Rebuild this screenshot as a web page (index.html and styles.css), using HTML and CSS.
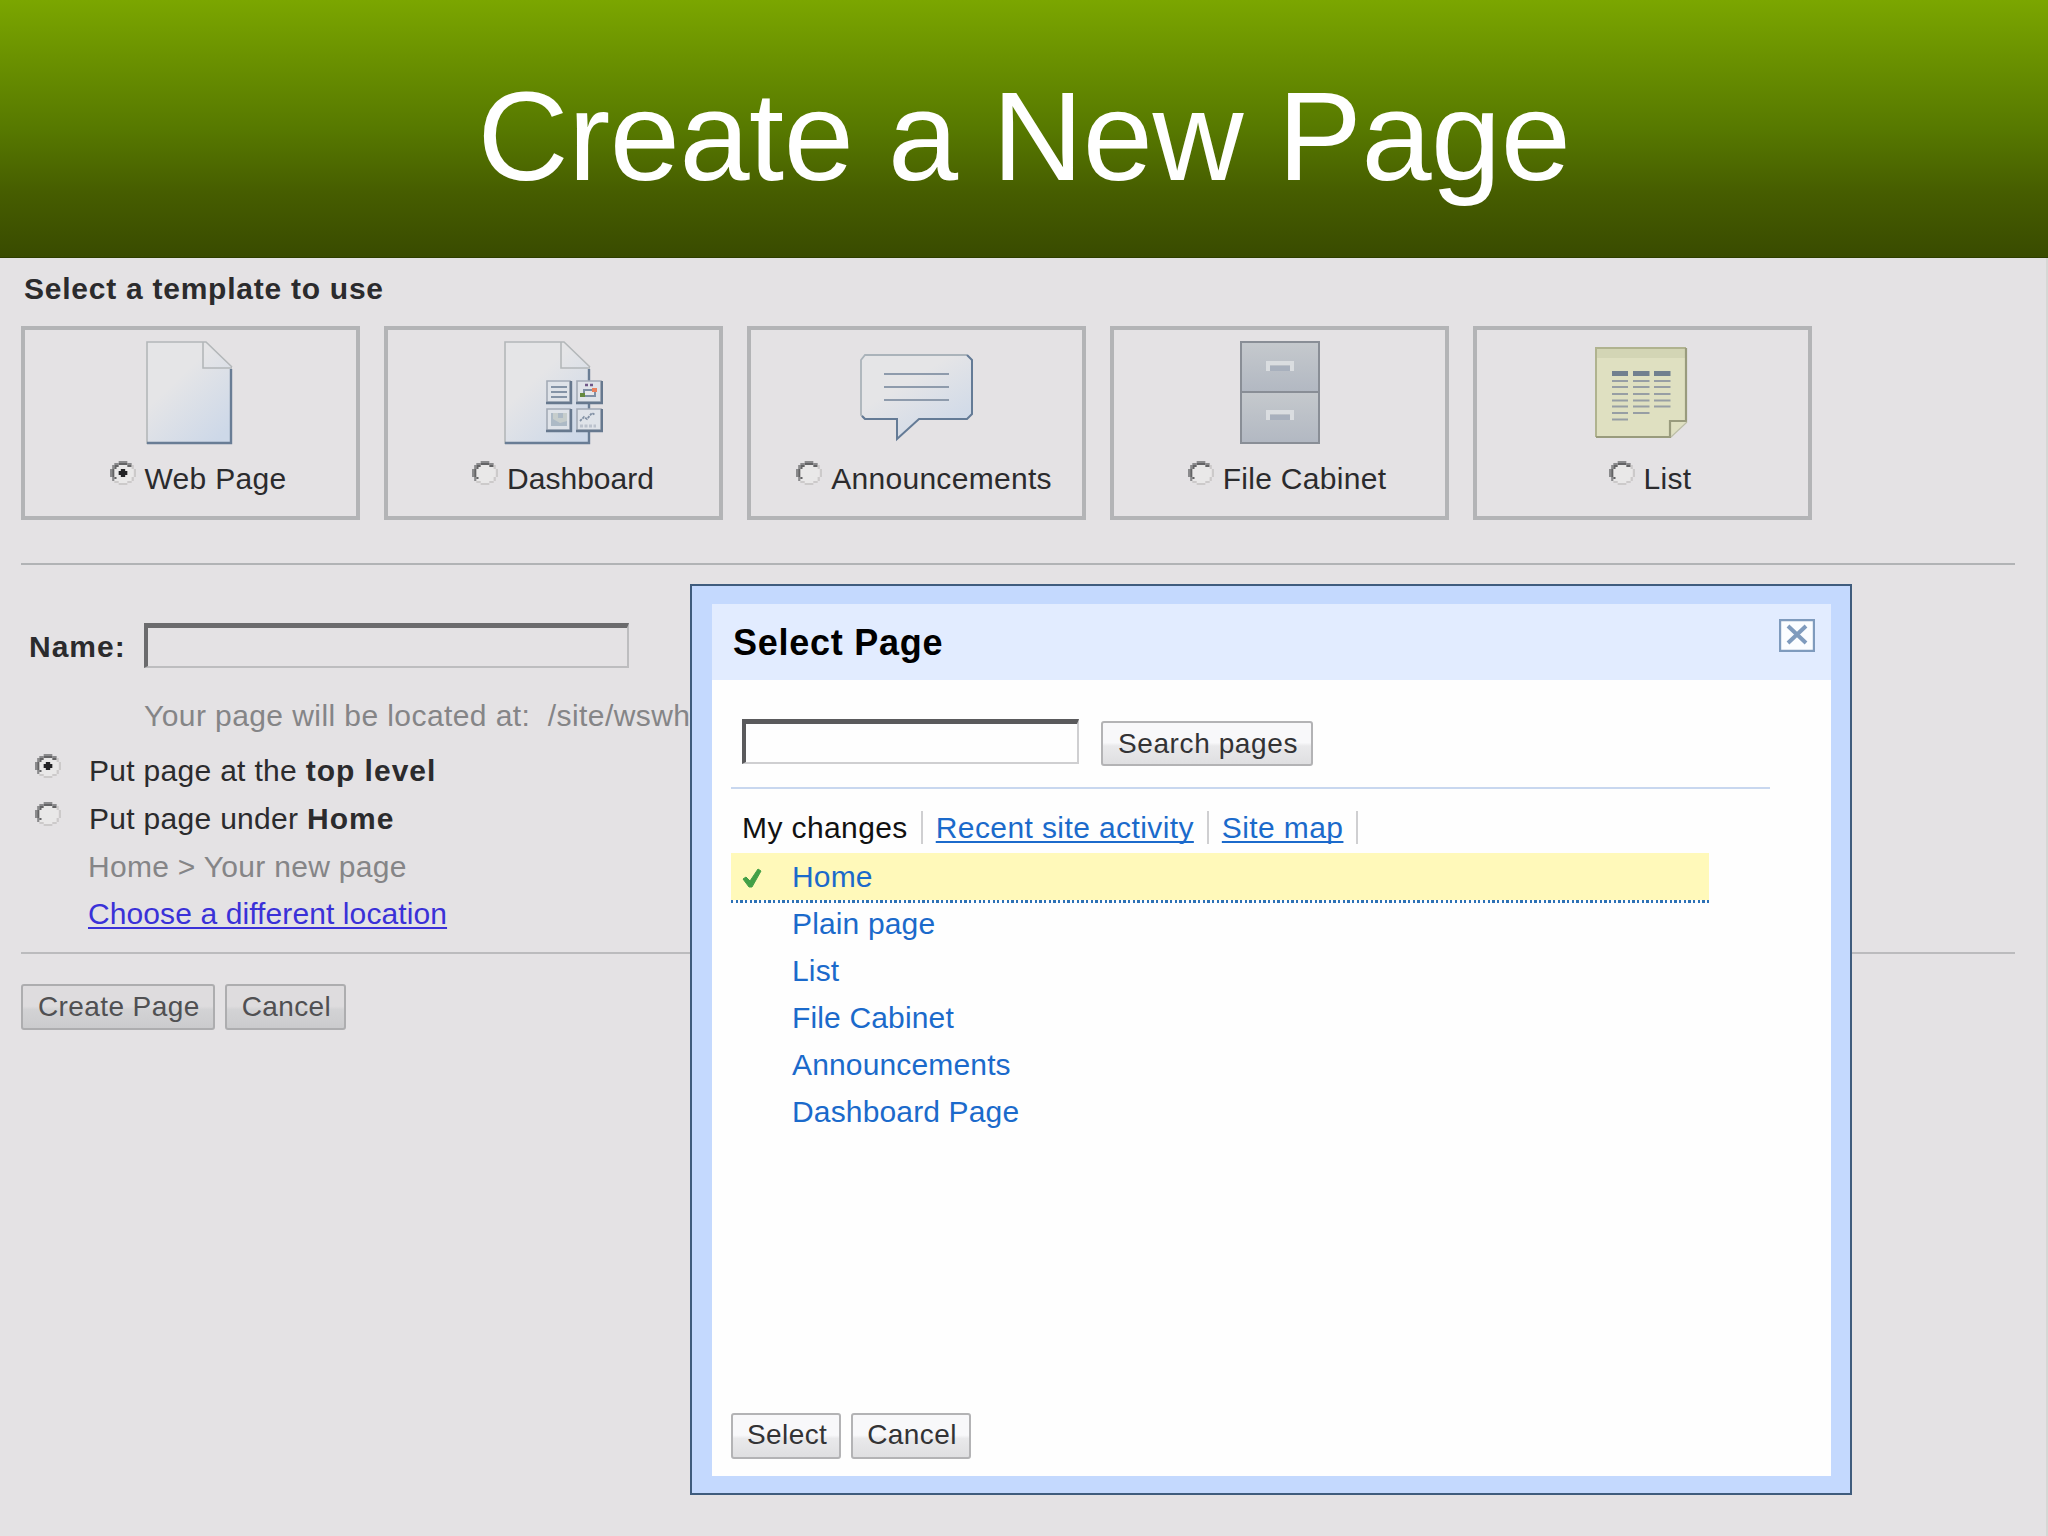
FILE: index.html
```
<!DOCTYPE html>
<html lang="en">

<head>
    <meta charset="UTF-8">
    <title>Create a New Page</title>
    <link rel="stylesheet" href="styles.css">
</head>

<body>
    <svg class="defs" width="0" height="0">
        <defs>
            <linearGradient id="paper" x1="0.2" y1="0" x2="1" y2="1">
                <stop offset="0.3" stop-color="#e5e5e7" />
                <stop offset="0.9" stop-color="#cdd8e8" />
            </linearGradient>
            <linearGradient id="drawer" x1="0" y1="0" x2="0" y2="1">
                <stop offset="0" stop-color="#c5c9cd" />
                <stop offset="1" stop-color="#b2b8c2" />
            </linearGradient>
        </defs>
        <symbol id="radio" viewBox="0 0 12 12" preserveAspectRatio="none">
            <path d="M4 1H8V2H10V4H11V8H10V10H8V11H4V10H2V8H1V4H2V2H4Z" fill="#e9e8e8" />
            <path d="M4 0h4v1h-4zM2 1h2v1h-2zM8 1h2v1h-2zM1 2h1v2h-1zM0 4h1v4h-1zM1 8h1v2h-1z" fill="#8a8a8c" />
            <path d="M4 1h4v1h-4zM2 2h2v1h-2zM8 2h2v1h-2zM2 3h1v1h-1zM1 4h1v4h-1zM2 8h1v1h-1z" fill="#636365" />
            <path d="M10 2h1v2h-1zM11 4h1v4h-1zM10 8h1v2h-1zM8 10h2v1h-2zM4 11h4v1h-4zM2 10h2v1h-2z" fill="#cccaca" />
        </symbol>
        <symbol id="radio-on" viewBox="0 0 12 12" preserveAspectRatio="none">
            <use href="#radio" width="12" height="12" />
            <path d="M5 4h2v1h1v2h-1v1h-2v-1h-1v-2h1z" fill="#232325" />
        </symbol>
    </svg>
    <header>
        <h1>Create a New Page</h1>
    </header>
    <main>
        <h2>Select a template to use</h2>
        <section class="templates">
            <article>
                <svg class="picture picture-page" width="87" height="104" viewBox="0 0 87 104">
                    <path d="M1 1H60L86 27V102H1Z" fill="url(#paper)" />
                    <path d="M1 103V1H60L86 26M57 1V27H86" fill="none" stroke="#b3b7b9" stroke-width="1.6" />
                    <path d="M1 102H85V28" fill="none" stroke="#697d95" stroke-width="2.4" />
                </svg>
                <label><svg class="radio"><use href="#radio-on" /></svg>Web Page</label>
            </article>
            <article>
                <svg class="picture" width="99" height="104" viewBox="0 0 99 104">
                    <path d="M1 1H60L86 27V102H1Z" fill="url(#paper)" />
                    <path d="M1 103V1H60L86 26M57 1V27H86" fill="none" stroke="#b3b7b9" stroke-width="1.6" />
                    <path d="M1 102H85V28" fill="none" stroke="#697d95" stroke-width="2.4" />
                    <g fill="#dfe3e9" stroke="#a3abb6" stroke-width="1.6">
                        <path d="M43 40H66V61H43ZM73 40H97V61H73ZM43 68H66V89H43ZM73 68H97V89H73Z" />
                    </g>
                    <path d="M42 62H67V40M72 62H98V40M42 90H67V68M72 90H98V68" fill="none" stroke="#66788e" stroke-width="2.4" />
                    <path d="M47 46H63M47 51H63M47 56H63" stroke="#8493a6" stroke-width="2" />
                    <path d="M81 44H84M86 44H89" stroke="#6f5888" stroke-width="2.5" />
                    <path d="M80 49H91V55H80Z" fill="#e6e8ec" stroke="#7f90a6" stroke-width="2" />
                    <path d="M88 47H93V51H88Z" fill="#ea815e" />
                    <path d="M76 52H81V56H76Z" fill="#64893f" />
                    <path d="M47 72H63V85H47Z" fill="#adbac6" />
                    <path d="M49 72H54V77H59V72H63V80L56 82L49 78Z" fill="#c6cdcc" />
                    <path d="M76 80L80 76L83 78L88 72L91 74" fill="none" stroke="#8190a4" stroke-width="1.8" stroke-dasharray="2.5 1" />
                    <path d="M76 85H92" stroke="#bbc2cd" stroke-width="3" stroke-dasharray="3 1.5" />
                </svg>
                <label class="shift"><svg class="radio"><use href="#radio" /></svg>Dashboard</label>
            </article>
            <article>
                <svg class="picture" width="113" height="104" viewBox="0 0 113 104">
                    <path d="M5 14H107L112 19V73L107 78H59L37 98V78H5L1 73V19Z" fill="url(#paper)" />
                    <path d="M5 78L1 74V19L5 14H107" fill="none" stroke="#aab3ba" stroke-width="1.8" />
                    <path d="M107 14L112 19V73L107 78H59L37 98V78H5L2 75" fill="none" stroke="#647b96" stroke-width="2" />
                    <path d="M24 33H89M24 46H89M24 59H89" stroke="#8e9bac" stroke-width="2" />
                </svg>
                <label><svg class="radio"><use href="#radio" /></svg>Announcements</label>
            </article>
            <article>
                <svg class="picture" width="80" height="104" viewBox="0 0 80 104">
                    <path d="M1 1H79V51H1Z" fill="url(#drawer)" />
                    <path d="M1 51H79V102H1Z" fill="url(#drawer)" />
                    <path d="M1 1H79V102H1ZM1 51H79" fill="none" stroke="#898e96" stroke-width="2" />
                    <path d="M28 30V22H52V30M28 79V71H52V79" fill="none" stroke="#dadde0" stroke-width="4" />
                    <path d="M30 25H50V30H30ZM30 74H50V79H30Z" fill="#a8b0bd" />
                </svg>
                <label><svg class="radio"><use href="#radio" /></svg>File Cabinet</label>
            </article>
            <article>
                <svg class="picture picture-list" width="93" height="104" viewBox="0 0 93 104">
                    <path d="M1 7H92V80L75 96H1Z" fill="#dfe0c1" />
                    <path d="M1 7H92V17H1Z" fill="#d3d5b5" />
                    <path d="M1 96V7H91" fill="none" stroke="#b0b38f" stroke-width="2" />
                    <path d="M1 96H75V80H91V7" fill="none" stroke="#999b7d" stroke-width="2.2" />
                    <path d="M76 96L92 81" stroke="#bcbea3" stroke-width="1.2" />
                    <path d="M17 32.500H33M38 32.500H54.500M59 32.500H75.500" stroke="#71808f" stroke-width="5" />
                    <path d="M17 40H33M38 40H54.500M59 40H75.500M17 46H33M38 46H54.500M59 46H75.500M17 53H33M38 53H54.500M59 53H75.500M17 59.500H33M38 59.500H54.500M59 59.500H75.500M17 65.500H33M38 65.500H54.500M59 65.500H75.500M17 72H33M38 72H54.500M17 78.500H33" stroke="#979ea4" stroke-width="2" />
                </svg>
                <label><svg class="radio"><use href="#radio" /></svg>List</label>
            </article>
        </section>
        <hr>
        <form>
            <div class="name">
                <label for="name">Name:</label>
                <input type="text" id="name">
            </div>
            <p class="location">Your page will be located at:&nbsp; /site/wswh</p>
            <label class="choice"><svg class="radio"><use href="#radio-on" /></svg><span>Put page at the <b>top level</b></span></label>
            <label class="choice"><svg class="radio"><use href="#radio" /></svg><span>Put page under <b>Home</b></span></label>
            <p class="path">Home &gt; Your new page</p>
            <p class="path"><a href="#">Choose a different location</a></p>
        </form>
        <hr class="thin">
        <div class="buttons">
            <button>Create Page</button>
            <button>Cancel</button>
        </div>
    </main>

    <section class="dialog">
        <div class="dialog-head">
            <h2>Select Page</h2>
            <svg class="close" width="36" height="33" viewBox="0 0 36 33">
                <path d="M1 1H35V32H1Z" fill="#fbfdff" stroke="#7f9bbd" stroke-width="2.4" />
                <path d="M9 7L27 24M27 7L9 24" stroke="#7f9bbd" stroke-width="4" />
            </svg>
        </div>
        <div class="dialog-body">
            <div class="search">
                <input type="text">
                <button>Search pages</button>
            </div>
            <nav>
                <span>My changes</span>
                <span><a href="#">Recent site activity</a></span>
                <span><a href="#">Site map</a></span>
            </nav>
            <ul>
                <li class="chosen">
                    <svg class="check" width="22" height="22" viewBox="0 0 22 22">
                        <path d="M2 12L5 10L9 14L17 2L20 4L11 20L8 20Z" fill="#43a047" stroke="#43a047" />
                    </svg>Home</li>
                <li>Plain page</li>
                <li>List</li>
                <li>File Cabinet</li>
                <li>Announcements</li>
                <li>Dashboard Page</li>
            </ul>
            <div class="buttons">
                <button>Select</button>
                <button>Cancel</button>
            </div>
        </div>
    </section>
</body>

</html>
```
FILE: styles.css
```
* {
    box-sizing: border-box;
    padding: 0;
    margin: 0;
}

body {
    position: relative;
    height: 1536px;
    overflow: hidden;
    background: #e4e2e4;
    color: #2b2b2d;
    font-family: "Liberation Sans", Arial, Helvetica, sans-serif;
    font-size: 30px;
    letter-spacing: .3px;
    line-height: 47px;
}

.defs {
    position: absolute;
}

header {
    height: 258px;
    background: linear-gradient(#7ba600, #6b9200 22%, #577900 50%, #465d00 75%, #394b00);
    border-bottom: 1px solid #2d3d00;
}

h1 {
    color: #fff;
    font-size: 126px;
    font-weight: normal;
    letter-spacing: -.4px;
    line-height: 273px;
    text-align: center;
}

main {
    height: 1278px;
    padding: 11px 31px 0 21px;
    border-right: 2px solid #d6d8d5;
}

h2,
b,
.name label {
    font-weight: bold;
    letter-spacing: .75px;
}

main h2 {
    padding-left: 3px;
    font-size: 30px;
    line-height: 40px;
}

.templates {
    display: flex;
    gap: 24px;
    margin: 17px 0 43px;
}

article {
    display: flex;
    flex-direction: column;
    align-items: center;
    width: 339px;
    height: 194px;
    padding-top: 11px;
    border: 4px solid #b3b4b6;
}

article label {
    display: flex;
    padding: 11px 0 0 15px;
    line-height: 45px;
}

article .shift {
    padding-left: 19px;
    letter-spacing: 0;
}

.picture {
    display: block;
}

.picture-page,
.picture-list {
    margin-right: 2px;
}

.radio {
    flex: none;
    width: 26px;
    height: 24px;
    margin: 5px 9px 0 0;
}

hr {
    height: 2px;
    border: none;
    background: #b1b3b5;
}

.thin {
    background: #bbbbbd;
}

.name {
    display: flex;
    padding-top: 58px;
}

.name label {
    width: 123px;
    padding-left: 8px;
    line-height: 48px;
    letter-spacing: 1px;
}

input {
    width: 485px;
    height: 45px;
    background: transparent;
    border: 2px solid #bdbdbf;
    border-top: 5px solid #6b6b6d;
    border-left: 4px solid #6b6b6d;
}

.location {
    padding: 25px 0 11px 123px;
    color: #858587;
    line-height: 40px;
    letter-spacing: .42px;
}

.choice {
    display: flex;
    padding-left: 14px;
    line-height: 48px;
}

.choice .radio {
    margin: 7px 28px 0 0;
}

.choice b {
    letter-spacing: 1px;
}

.path {
    padding-left: 67px;
    color: #858587;
}

.path a {
    color: #3a31d8;
    letter-spacing: .1px;
}

form {
    padding-bottom: 15px;
}

a {
    text-decoration-thickness: 2px;
    text-underline-offset: 3px;
    text-decoration-skip-ink: none;
}

.buttons {
    display: flex;
    gap: 10px;
}

main .buttons {
    padding-top: 30px;
}

button {
    height: 46px;
    padding: 0 13px 1px 15px;
    border: 2px solid #b3b3b5;
    border-radius: 3px;
    background: linear-gradient(#f8f8fa 48%, #e9e9eb 56%, #dfdfe1);
    color: #333335;
    font-family: inherit;
    font-size: 28px;
    letter-spacing: .4px;
    line-height: 40px;
}

main button {
    border-color: #adadaf;
    background: linear-gradient(#dedcde 48%, #d3d3d5 56%, #cbcbcd);
    color: #505052;
}

.dialog {
    position: absolute;
    left: 690px;
    top: 584px;
    width: 1162px;
    height: 911px;
    padding: 18px 19px 17px 20px;
    border: 2px solid #3f5c7d;
    background: #c4d9fe;
}

.dialog-head {
    display: flex;
    justify-content: space-between;
    height: 76px;
    padding: 15px 16px 0 21px;
    background: #e2ecff;
}

.dialog-head h2 {
    color: #000;
    font-size: 36px;
    line-height: 48px;
}

.dialog-body {
    display: flex;
    flex-direction: column;
    height: 796px;
    padding: 39px 0 17px 19px;
    background: #fefefe;
}

.dialog-body .buttons button {
    padding: 0 12px 2px 14px;
}

.search {
    display: flex;
    gap: 22px;
    width: 1039px;
    height: 70px;
    padding-left: 11px;
    border-bottom: 2px solid #c8d7ef;
}

.search input {
    width: 337px;
    border-color: #5a5a5c #cfcfd1 #cfcfd1 #5a5a5c;
}

.search button {
    height: 45px;
    margin-top: 2px;
    padding-bottom: 0;
    letter-spacing: .6px;
}

nav {
    display: flex;
    padding: 22px 0 9px 11px;
    color: #111;
}

nav span {
    margin-right: 13px;
    padding-right: 13px;
    border-right: 2px solid #cfcfd1;
    line-height: 33px;
    letter-spacing: .4px;
}

nav a,
li {
    color: #1b6acb;
}

ul {
    flex: 1;
    width: 978px;
    list-style: none;
    letter-spacing: .15px;
}

li {
    height: 47px;
    padding-left: 61px;
    line-height: 48px;
}

/* dotted line under the chosen page */
.chosen {
    display: flex;
    height: 50px;
    margin-bottom: -3px;
    padding-left: 10px;
    background:
        repeating-linear-gradient(90deg, #2c71b5 0 2.3px, #fefefe 2.3px 4.67px) 0 100% / 100% 3px no-repeat,
        #fff9ba;
}

.check {
    margin: 14px 29px 0 0;
}
```
